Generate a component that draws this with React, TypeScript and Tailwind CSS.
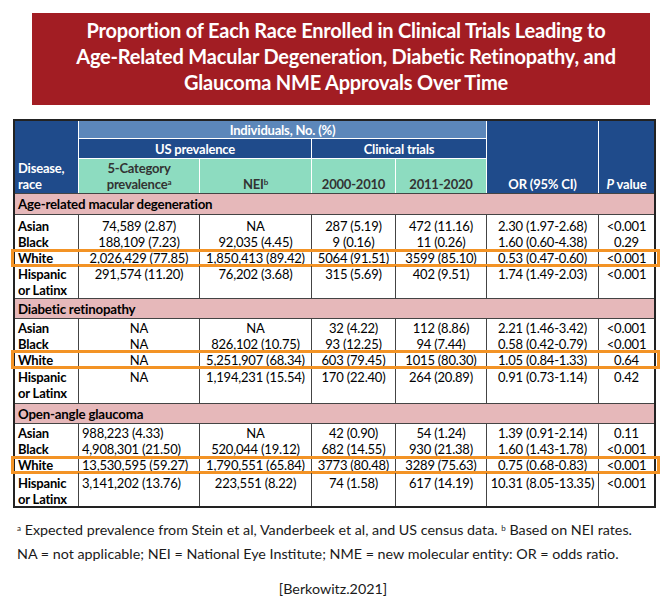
import React from 'react';

type Row = { race: string; cells: string[]; row: string; box?: string };
type Section = { name: string; head: string; firstLeft: boolean; rows: Row[] };

const sections: Section[] = [
  {
    name: 'Age-related macular degeneration',
    head: 'h-[22px]',
    firstLeft: false,
    rows: [
      { race: 'Asian', cells: ['74,589 (2.87)', 'NA', '287 (5.19)', '472 (11.16)', '2.30 (1.97-2.68)', '<0.001'], row: 'h-[19px] pt-[3px]' },
      { race: 'Black', cells: ['188,109 (7.23)', '92,035 (4.45)', '9 (0.16)', '11 (0.26)', '1.60 (0.60-4.38)', '0.29'], row: 'h-[16px]' },
      { race: 'White', cells: ['2,026,429 (77.85)', '1,850,413 (89.42)', '5064 (91.51)', '3599 (85.10)', '0.53 (0.47-0.60)', '<0.001'], row: 'h-[16px]', box: 'top-[-1px] h-[18px]' },
      { race: 'Hispanic or Latinx', cells: ['291,574 (11.20)', '76,202 (3.68)', '315 (5.69)', '402 (9.51)', '1.74 (1.49-2.03)', '<0.001'], row: 'h-[32px]' },
    ],
  },
  {
    name: 'Diabetic retinopathy',
    head: 'h-[21px]',
    firstLeft: false,
    rows: [
      { race: 'Asian', cells: ['NA', 'NA', '32 (4.22)', '112 (8.86)', '2.21 (1.46-3.42)', '<0.001'], row: 'h-[17px] pt-[1px]' },
      { race: 'Black', cells: ['NA', '826,102 (10.75)', '93 (12.25)', '94 (7.44)', '0.58 (0.42-0.79)', '<0.001'], row: 'h-[16px]' },
      { race: 'White', cells: ['NA', '5,251,907 (68.34)', '603 (79.45)', '1015 (80.30)', '1.05 (0.84-1.33)', '0.64'], row: 'h-[17px]', box: 'top-[-2px] h-[19px]' },
      { race: 'Hispanic or Latinx', cells: ['NA', '1,194,231 (15.54)', '170 (22.40)', '264 (20.89)', '0.91 (0.73-1.14)', '0.42'], row: 'h-[34px]' },
    ],
  },
  {
    name: 'Open-angle glaucoma',
    head: 'h-[21px]',
    firstLeft: true,
    rows: [
      { race: 'Asian', cells: ['988,223 (4.33)', 'NA', '42 (0.90)', '54 (1.24)', '1.39 (0.91-2.14)', '0.11'], row: 'h-[17px] pt-[1px]' },
      { race: 'Black', cells: ['4,908,301 (21.50)', '520,044 (19.12)', '682 (14.55)', '930 (21.38)', '1.60 (1.43-1.78)', '<0.001'], row: 'h-[16px]' },
      { race: 'White', cells: ['13,530,595 (59.27)', '1,790,551 (65.84)', '3773 (80.48)', '3289 (75.63)', '0.75 (0.68-0.83)', '<0.001'], row: 'h-[16px]', box: 'top-[-1px] h-[18px]' },
      { race: 'Hispanic or Latinx', cells: ['3,141,202 (13.76)', '223,551 (8.22)', '74 (1.58)', '617 (14.19)', '10.31 (8.05-13.35)', '<0.001'], row: 'h-[33px] pt-[2px]' },
    ],
  },
];

// column widths, border included
const cols = ['w-[121px]', 'w-[112px]', 'w-[84px]', 'w-[91px]', 'w-[112px]', 'w-[55px]'];

const dark = 'bg-[#1f4b8b] text-white font-bold border-white';
const mint = 'bg-[#8ddcc0] text-[#333] font-bold border-r border-white flex items-end justify-center text-center pb-[1px]';

export default function App() {
  return (
    <div className="w-[669px] h-[610px] bg-white font-['Lato',sans-serif] text-black">
      <div className="pt-[13px] pl-[32px]">
        <div className="w-[618px] h-[92px] bg-[#a21d23] pt-[4px] pl-[10px] text-center text-white font-bold text-[20px] leading-[26px] tracking-[-0.2px]">
          <p>
            Proportion of Each Race Enrolled in Clinical Trials Leading to
            <br />
            Age-Related Macular Degeneration, Diabetic Retinopathy, and
            <br />
            Glaucoma NME Approvals Over Time
          </p>
        </div>
      </div>

      <div className="ml-[13px] mt-[14px] w-[643px] border-2 border-[#222] text-[13px] leading-[16px] tracking-[-0.2px]">
        {/* header */}
        <div className="grid grid-cols-[64px_121px_112px_84px_91px_112px_55px] grid-rows-[18px_20px_34px]">
          <div className={`${dark} row-span-3 border-r flex items-end pl-[3px] pb-[1px]`}>
            Disease,
            <br />
            race
          </div>
          <div className="col-span-4 bg-[#5c87ba] text-white font-bold border-r border-b border-white flex items-center justify-center">
            Individuals, No. (%)
          </div>
          <div className={`${dark} row-span-3 border-r flex items-end justify-center pb-[1px]`}>OR (95% CI)</div>
          <div className={`${dark} row-span-3 flex items-end justify-center pb-[1px]`}>
            <span>
              <i>P</i> value
            </span>
          </div>
          <div className={`${dark} col-span-2 border-r border-b flex items-center justify-center`}>US prevalence</div>
          <div className={`${dark} col-span-2 border-r border-b flex items-center justify-center`}>Clinical trials</div>
          <div className={mint}>
            <span>
              5-Category
              <br />
              prevalence<sup className="text-[8px]">a</sup>
            </span>
          </div>
          <div className={mint}>
            <span>
              NEI<sup className="text-[8px]">b</sup>
            </span>
          </div>
          <div className={mint}>2000-2010</div>
          <div className={mint}>2011-2020</div>
        </div>

        {/* body */}
        {sections.map((s) => (
          <div key={s.name}>
            <div className={`${s.head} border-y border-[#444] bg-[#e6b8ba] font-bold text-[13.3px] pl-[3px] flex items-center`}>
              {s.name}
            </div>
            {s.rows.map((r) => (
              <div key={r.race} className="relative flex">
                <div className={`w-[64px] shrink-0 border-r border-[#444] font-bold pl-[3px] ${r.row}`}>
                  {r.race === 'Hispanic or Latinx' ? (
                    <>
                      Hispanic
                      <br />
                      or Latinx
                    </>
                  ) : (
                    r.race
                  )}
                </div>
                {r.cells.map((c, i) => (
                  <div
                    key={i}
                    className={`${cols[i]} shrink-0 whitespace-nowrap ${r.row} ${i < 5 ? 'border-r border-[#444]' : ''} ${
                      i === 0 && s.firstLeft ? 'text-left pl-[3px]' : 'text-center'
                    }`}
                  >
                    {c}
                  </div>
                ))}
                {r.box && (
                  <div className={`absolute left-[-4px] w-[649px] border-[3px] border-[#f39325] ${r.box}`} />
                )}
              </div>
            ))}
          </div>
        ))}
      </div>

      <div className="pl-[17px] pt-[10px] text-[14.3px] leading-[24px] text-[#1a1a1a]">
        <p>
          <sup className="text-[8px]">a</sup> Expected prevalence from Stein et al, Vanderbeek et al, and US census data.{' '}
          <sup className="text-[8px]">b</sup> Based on NEI rates.
        </p>
        <p>NA = not applicable; NEI = National Eye Institute; NME = new molecular entity: OR = odds ratio.</p>
        <p className="text-center mt-[11px] pr-[20px]">[Berkowitz.2021]</p>
      </div>
    </div>
  );
}
